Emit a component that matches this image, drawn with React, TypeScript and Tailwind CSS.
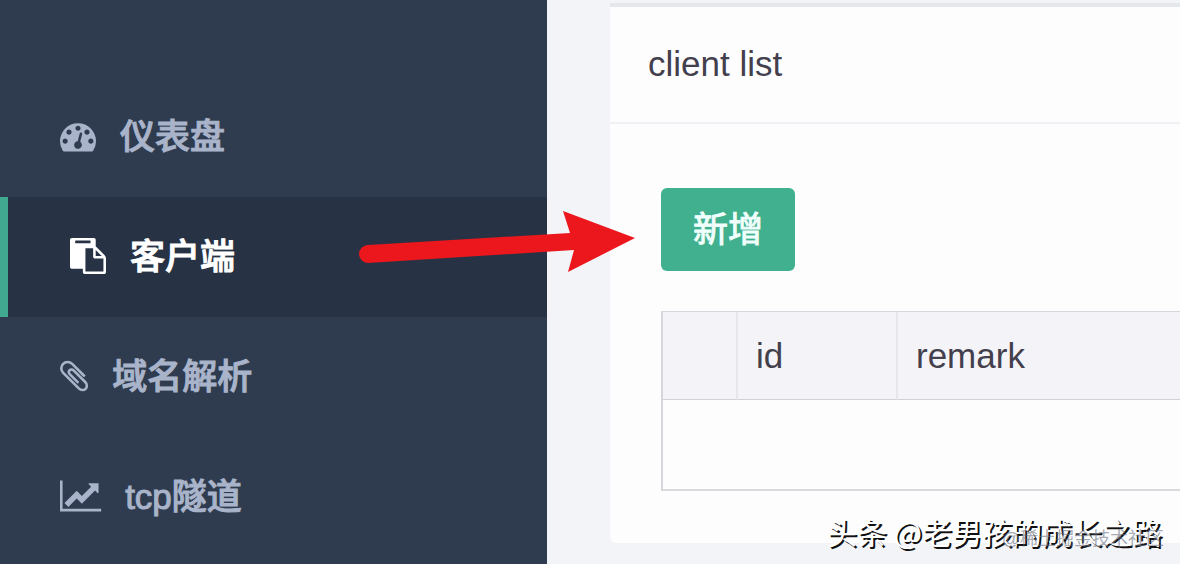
import { clsx } from "clsx";

type IconProps = {
  viewBox: string;
  path: string;
};

const menuItems = [
  {
    label: "仪表盘",
    active: false,
    icon: {
      viewBox: "0 0 1792 1792",
      path: "M384 1152q0-53-37.5-90.5t-90.5-37.5-90.5 37.5-37.5 90.5 37.5 90.5 90.5 37.5 90.5-37.5 37.5-90.5zm192-448q0-53-37.5-90.5t-90.5-37.5-90.5 37.5-37.5 90.5 37.5 90.5 90.5 37.5 90.5-37.5 37.5-90.5zm428 481l101-382q6-26-7.5-48.5t-38.5-29.5-48 6.5-30 39.5l-101 382q-60 5-107 43.5t-63 98.5q-20 77 20 146t117 89 146-20 89-117q16-60-6-117t-72-91zm660-33q0-53-37.5-90.5t-90.5-37.5-90.5 37.5-37.5 90.5 37.5 90.5 90.5 37.5 90.5-37.5 37.5-90.5zm-640-640q0-53-37.5-90.5t-90.5-37.5-90.5 37.5-37.5 90.5 37.5 90.5 90.5 37.5 90.5-37.5 37.5-90.5zm448 192q0-53-37.5-90.5t-90.5-37.5-90.5 37.5-37.5 90.5 37.5 90.5 90.5 37.5 90.5-37.5 37.5-90.5zm320 448q0 261-141 483-19 29-54 29h-1402q-35 0-54-29-141-221-141-483 0-182 71-348t191-286 286-191 348-71 348 71 286 191 191 286 71 348z",
    },
  },
  {
    label: "客户端",
    active: true,
    icon: {
      viewBox: "0 0 1792 1792",
      path: "M768 1664h896v-640h-416q-40 0-68-28t-28-68v-416h-384v1152zm256-1440v-64q0-13-9.5-22.5t-22.5-9.5h-704q-13 0-22.5 9.5t-9.5 22.5v64q0 13 9.5 22.5t22.5 9.5h704q13 0 22.5-9.5t9.5-22.5zm256 672h299l-299-299v299zm512 128v672q0 40-28 68t-68 28h-960q-40 0-68-28t-28-68v-160h-544q-40 0-68-28t-28-68v-1344q0-40 28-68t68-28h1088q40 0 68 28t28 68v328q21 13 36 28l408 408q28 28 48 76t20 88z",
    },
  },
  {
    label: "域名解析",
    active: false,
    icon: {
      viewBox: "196 0 1400 1792",
      path: "M1596 1385q0 117-79 196t-196 79q-135 0-235-100l-777-776q-113-115-113-271 0-159 110-270t269-111q158 0 273 113l605 606q10 10 10 22 0 16-30.5 46.5t-46.5 30.5q-13 0-23-10l-606-607q-79-77-181-77-106 0-179 75t-73 181q0 105 76 181l776 777q63 63 145 63 64 0 106-42t42-106q0-82-63-145l-581-581q-26-24-60-24-29 0-48 19t-19 48q0 32 25 59l410 410q10 10 10 22 0 16-31 47t-47 31q-12 0-22-10l-410-410q-63-61-63-149 0-82 57-139t139-57q88 0 149 63l581 581q100 98 100 235z",
    },
  },
  {
    label: "tcp隧道",
    active: false,
    icon: {
      viewBox: "0 0 2048 1792",
      path: "M2048 1536v128h-2048v-1536h128v1408h1920zm-128-1248v435q0 21-19.5 29.5t-35.5-7.5l-121-121-633 633q-10 10-23 10t-23-10l-233-233-416 416-192-192 585-585q10-10 23-10t23 10l233 233 464-464-121-121q-16-16-7.5-35.5t29.5-19.5h435q14 0 23 9t9 23z",
    },
  },
];

const MenuIcon = ({ viewBox, path }: IconProps) => (
  <svg
    viewBox={viewBox}
    fill="currentColor"
    className="h-9 w-auto overflow-visible"
    aria-hidden="true"
  >
    <path d={path} />
  </svg>
);

const Sidebar = () => {
  return (
    <nav className="w-[547px] shrink-0 bg-[#2f3c4f] pt-[77px]">
      <ul>
        {menuItems.map((item) => (
          <li key={item.label}>
            <a
              href="#"
              className={clsx(
                "flex h-[120px] items-center gap-6 pb-0.5 font-medium [-webkit-text-stroke:1px_currentColor]",
                item.active
                  ? "border-l-8 border-[#40a98f] bg-[#273345] pl-[62px] text-white"
                  : "pl-[60px] text-[#a9b4ca]"
              )}
            >
              <MenuIcon {...item.icon} />
              <span>{item.label}</span>
            </a>
          </li>
        ))}
      </ul>
    </nav>
  );
};

const ClientPanel = () => {
  return (
    <section className="rounded-bl-md border-t-4 border-[#e4e7eb] bg-[#fdfdfe] pb-[52px]">
      <h1 className="border-b-2 border-[#eff1f4] px-[38px] pt-[31px] pb-[33px]">client list</h1>

      <div className="pt-16 pl-[51px]">
        <button className="rounded-md bg-[#41b08f] px-8 py-4 text-[#f0fffb] [-webkit-text-stroke:1px_currentColor]">
          新增
        </button>

        {/* Client table */}

        <table className="mt-10 w-full table-fixed border-separate border-spacing-0 border-t border-l-2 border-[#d5d7dc]">
          <thead>
            <tr className="h-[88px] bg-[#f4f4f8] text-left">
              <th
                className="w-[75px] border-r-2 border-b border-r-[#e6e7ec] border-b-[#d0d2d8]"
                aria-label="expand"
              />
              <th className="w-[160px] border-r-2 border-b border-r-[#e6e7ec] border-b-[#d0d2d8] px-[18px] font-normal">
                id
              </th>
              <th className="border-b border-[#d0d2d8] px-[18px] font-normal">remark</th>
            </tr>
          </thead>
          <tbody>
            <tr className="h-[91px]">
              <td colSpan={3} className="border-b-2 border-[#d9dade]" />
            </tr>
          </tbody>
        </table>
      </div>
    </section>
  );
};

const App = () => {
  return (
    <div className="relative flex min-h-screen overflow-hidden bg-[#f3f4f8] font-['Liberation_Sans','Noto_Sans_CJK_SC',sans-serif] text-[35px] leading-[51px] text-[#433f4d]">
      <Sidebar />

      <main className="min-w-0 flex-1 pt-[3px] pl-[63px]">
        <ClientPanel />
      </main>

      {/* Arrow pointing at the add button */}

      <svg
        viewBox="0 0 280 66"
        className="pointer-events-none absolute top-[208px] left-[357px] w-[280px]"
        aria-hidden="true"
      >
        <path
          d="M11 37L213 25L206 3L278 30L211 64L217 42L11 55A9 9 0 0 1 11 37Z"
          fill="#ec161d"
        />
      </svg>

      {/* Watermarks */}

      <p className="absolute right-[18px] bottom-2.5 font-['Noto_Sans_CJK_SC',sans-serif] text-[30px] leading-[46px] whitespace-nowrap text-white [text-shadow:2px_2px_0_#111]">
        头条 @老男孩的成长之路
      </p>
      <p className="absolute right-4 bottom-0.5 text-lg leading-[46px] whitespace-nowrap text-gray-500/60">
        @稀土掘金技术社区
      </p>
    </div>
  );
};

export default App;
